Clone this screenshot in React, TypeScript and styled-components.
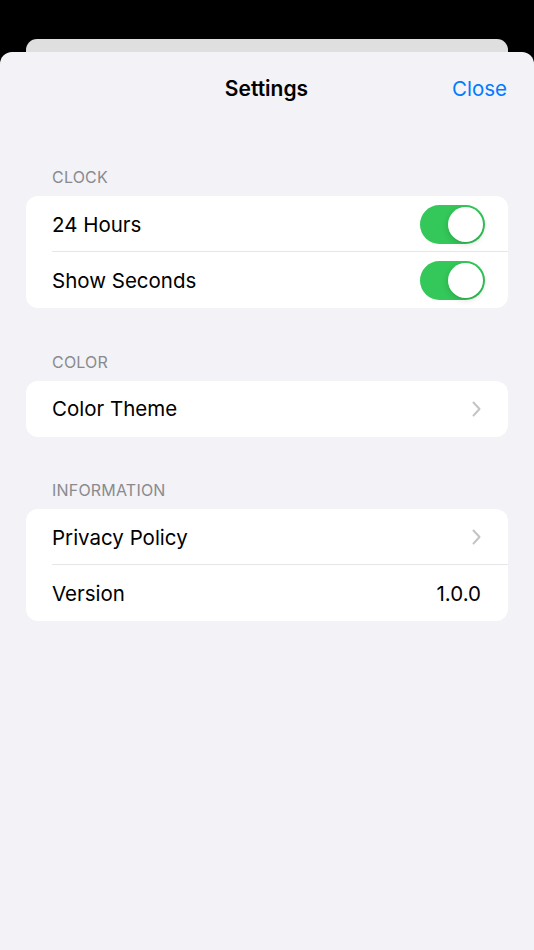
import styled, { createGlobalStyle } from 'styled-components';

const GlobalStyle = createGlobalStyle`
  html, body {
    margin: 0;
    padding: 0;
    background: #000;
  }
  body {
    font-family: Inter, "Noto Sans", "Liberation Sans", sans-serif;
    -webkit-font-smoothing: antialiased;
  }
`;

const Screen = styled.div`
  min-height: 950px;
  display: flex;
  flex-direction: column;
  padding-top: 39px;
  box-sizing: border-box;
`;

const BackCard = styled.div`
  height: 13px;
  margin: 0 26px;
  background: #dfdfdf;
  border-radius: 11px 11px 0 0;
`;

const Sheet = styled.div`
  flex: 1;
  background: #f2f2f7;
  border-radius: 12px 12px 0 0;
`;

const NavBar = styled.header`
  height: 72px;
  display: grid;
  grid-template-columns: 1fr auto 1fr;
  align-items: center;
  padding: 0 27px 0 26px;
`;

const Title = styled.h1`
  grid-column: 2;
  margin: 0;
  font-size: 21px;
  font-weight: 600;
  color: #000;
`;

const CloseButton = styled.button`
  justify-self: end;
  border: none;
  background: none;
  padding: 0;
  font: inherit;
  font-size: 20.5px;
  color: #007aff;
`;

const Content = styled.main`
  display: flex;
  flex-direction: column;
  gap: 43.5px;
  padding: 43px 26px 0;
`;

const Section = styled.section`
  display: flex;
  flex-direction: column;
`;

const SectionLabel = styled.h2`
  margin: 0 0 9px 26px;
  font-size: 16px;
  line-height: 20px;
  font-weight: 400;
  color: #8a8a8e;
  letter-spacing: 0.2px;
`;

const Card = styled.div`
  background: #fff;
  border-radius: 12px;
  overflow: hidden;
`;

const Row = styled.div<{ $last?: boolean }>`
  position: relative;
  height: 56px;
  display: flex;
  align-items: center;
  justify-content: space-between;
  padding: 0 23px 0 26px;

  &::after {
    content: '';
    display: ${(p) => (p.$last ? 'none' : 'block')};
    position: absolute;
    left: 26px;
    right: 0;
    bottom: 0;
    height: 1px;
    background: #e6e6ea;
  }
`;

const RowLabel = styled.span`
  font-size: 20.5px;
  color: #000;
`;

const RowValue = styled.span`
  font-size: 20.5px;
  color: #000;
  margin-right: 4px;
`;

const Toggle = styled.div<{ $on: boolean }>`
  width: 65px;
  height: 39px;
  border-radius: 20px;
  background: ${(p) => (p.$on ? '#34c759' : '#e9e9eb')};
  display: flex;
  align-items: center;
  justify-content: ${(p) => (p.$on ? 'flex-end' : 'flex-start')};
  padding: 2px;
  box-sizing: border-box;
`;

const Knob = styled.div`
  width: 35px;
  height: 35px;
  border-radius: 50%;
  background: #fff;
  box-shadow: 0 2px 6px rgba(0, 0, 0, 0.15), 0 1px 1px rgba(0, 0, 0, 0.06);
`;

const Chevron = () => (
  <svg width="12" height="20" viewBox="0 0 12 20" style={{ marginRight: 3 }}>
    <path d="M3.5 3.5 L9.5 10 L3.5 16.5" fill="none" stroke="#c4c4c7" strokeWidth="2" strokeLinecap="round" strokeLinejoin="round" />
  </svg>
);

export default function App() {
  return (
    <>
      <GlobalStyle />
      <Screen>
        <BackCard />
        <Sheet>
          <NavBar>
            <Title>Settings</Title>
            <CloseButton>Close</CloseButton>
          </NavBar>
          <Content>
            <Section>
              <SectionLabel>CLOCK</SectionLabel>
              <Card>
                <Row>
                  <RowLabel>24 Hours</RowLabel>
                  <Toggle $on><Knob /></Toggle>
                </Row>
                <Row $last>
                  <RowLabel>Show Seconds</RowLabel>
                  <Toggle $on><Knob /></Toggle>
                </Row>
              </Card>
            </Section>
            <Section>
              <SectionLabel>COLOR</SectionLabel>
              <Card>
                <Row $last>
                  <RowLabel>Color Theme</RowLabel>
                  <Chevron />
                </Row>
              </Card>
            </Section>
            <Section>
              <SectionLabel>INFORMATION</SectionLabel>
              <Card>
                <Row>
                  <RowLabel>Privacy Policy</RowLabel>
                  <Chevron />
                </Row>
                <Row $last>
                  <RowLabel>Version</RowLabel>
                  <RowValue>1.0.0</RowValue>
                </Row>
              </Card>
            </Section>
          </Content>
        </Sheet>
      </Screen>
    </>
  );
}
